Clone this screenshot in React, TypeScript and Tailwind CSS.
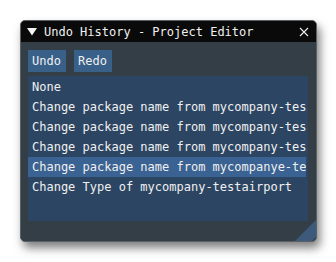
import React, { useState } from "react";

const entries = [
  "None",
  "Change package name from mycompany-testairport",
  "Change package name from mycompany-testairport",
  "Change package name from mycompany-testairport",
  "Change package name from mycompanye-testairport",
  "Change Type of mycompany-testairport",
];

const App: React.FC = () => {
  const [selected, setSelected] = useState(4);

  return (
    <div
      className="w-[336px] h-[262px] bg-white pt-[20px] pl-[20px]"
      style={{ fontFamily: '"DejaVu Sans Mono", "Liberation Mono", monospace' }}
    >
      {/* Ventana */}
      <div className="relative w-[297px] h-[222px] rounded-[5px] border border-[#5c6166] bg-[#343e47] shadow-[3px_6px_10px_rgba(0,0,0,0.5)] flex flex-col">
        <div className="h-[21px] shrink-0 bg-[#0a0a0a] rounded-t-[4px] flex items-center pl-[6px] pr-[7px] text-[12px] text-[#f0f0f0]">
          <svg width="10" height="8" viewBox="0 0 10 8" className="mr-[7px]">
            <polygon points="0,0 10,0 5,7.5" fill="#f4f4f4" />
          </svg>
          <span className="flex-1 leading-none">Undo History - Project Editor</span>
          <svg width="10" height="10" viewBox="0 0 10 10">
            <path d="M1 1 L9 9 M9 1 L1 9" stroke="#e6e6e6" strokeWidth="1.2" />
          </svg>
        </div>

        <div className="flex-1 flex flex-col px-[7px] pt-[8px] pb-[20px]">
          <div className="flex gap-[8px] text-[12px] text-[#f0f0f0]">
            <button className="w-[38px] h-[22px] bg-[#396089] text-left pl-[4px]">Undo</button>
            <button className="w-[38px] h-[22px] bg-[#396089] text-left pl-[4px]">Redo</button>
          </div>

          {/* Lista de acciones */}
          <div className="mt-[4px] flex-1 w-[280px] bg-[#2c4562] pt-[1px] pr-[2px] overflow-hidden">
            {entries.map((entry, i) => (
              <div
                key={i}
                onClick={() => setSelected(i)}
                className={
                  "h-[20px] flex items-center px-[4px] whitespace-nowrap overflow-hidden text-[12px] text-[#f0f0f0] " +
                  (i === selected ? "bg-[#3a6292]" : "")
                }
              >
                {entry}
              </div>
            ))}
          </div>
        </div>

        <svg width="21" height="21" viewBox="0 0 21 21" className="absolute right-0 bottom-0">
          <polygon points="21,0 21,17 17,21 0,21" fill="#3d5a7c" />
        </svg>
      </div>
    </div>
  );
};

export default App;
